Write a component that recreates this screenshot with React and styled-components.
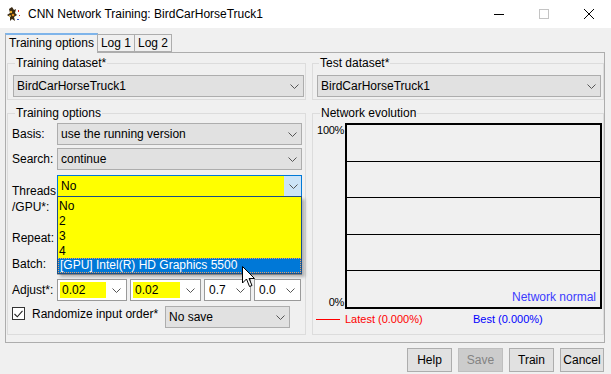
import React from "react";
import styled, { createGlobalStyle } from "styled-components";

const GlobalStyle = createGlobalStyle`
  html, body { margin: 0; padding: 0; background: #f0f0f0; }
  body {
    font-family: "Liberation Sans", Arial, sans-serif;
    font-size: 12px;
    color: #000;
  }
  * { box-sizing: border-box; }
`;

const Window = styled.div`
  position: relative;
  width: 611px;
  height: 374px;
  background: #f0f0f0;
  display: flex;
  flex-direction: column;
  overflow: hidden;
`;

const TitleBar = styled.div`
  height: 28px;
  flex-shrink: 0;
  background: #fff;
  display: flex;
  align-items: center;
`;

const AppIcon = styled.div`
  width: 16px;
  height: 16px;
  margin: 0 6px 0 6px;
  display: flex;
`;

const Title = styled.div`
  flex: 1;
  font-size: 12px;
  line-height: 14px;
`;

const WinButton = styled.div`
  width: 45px;
  height: 28px;
  display: flex;
  align-items: center;
  justify-content: center;
`;

const TabStrip = styled.div`
  display: flex;
  align-items: flex-end;
  height: 19px;
  margin: 5px 0 0 5px;
  position: relative;
  z-index: 1;
`;

const Tab = styled.div`
  height: ${(p) => (p.$active ? "20px" : "18px")};
  margin-bottom: ${(p) => (p.$active ? "-1px" : "0")};
  padding: 0 3px;
  border: 1px solid #adadad;
  border-left: ${(p) => (p.$first ? "1px solid #adadad" : "none")};
  border-top: ${(p) => (p.$active ? "2px solid #7eb4ea" : "1px solid #adadad")};
  border-bottom: ${(p) => (p.$active ? "none" : "1px solid #adadad")};
  background: #f0f0f0;
  line-height: 16px;
  font-size: 12px;
  white-space: nowrap;
`;

const Panel = styled.div`
  margin: 0 6px 0 5px;
  border: 1px solid #adadad;
  padding: 3px 1px 7px 1px;
  display: grid;
  grid-template-columns: 299px 292px;
  grid-template-rows: auto auto;
  column-gap: 6px;
  row-gap: 6px;
`;

const Group = styled.fieldset`
  margin: 0;
  min-width: 0;
  border: 1px solid #dcdcdc;
  padding: ${(p) => p.$pad};
`;

const Legend = styled.legend`
  margin-left: ${(p) => p.$indent || 2}px;
  padding: 0 1px;
  font-size: 12px;
  line-height: 14px;
`;

const ComboBox = styled.div`
  position: relative;
  height: 22px;
  width: ${(p) => (p.$w ? `${p.$w}px` : "100%")};
  flex-shrink: 0;
  border: 1px solid ${(p) => (p.$focus ? "#0078d7" : p.$edit ? "#9a9a9a" : "#adadad")};
  background: ${(p) => p.$bg || "#e1e1e1"};
  display: flex;
  align-items: stretch;
`;

const ComboText = styled.div`
  flex: 1;
  padding-left: ${(p) => p.$pl ?? 3}px;
  line-height: 20px;
  white-space: nowrap;
  overflow: hidden;
`;

const EditField = styled.div`
  flex: 1;
  margin: 2px 0 2px 2px;
  background: ${(p) => p.$bg || "transparent"};
  padding-left: 2px;
  line-height: 16px;
`;

const ArrowZone = styled.div`
  width: ${(p) => p.$w || 17}px;
  display: flex;
  align-items: center;
  justify-content: center;
  background: ${(p) => (p.$active ? "#cce4f7" : "transparent")};
  border-left: ${(p) => (p.$active ? "1px solid #cce4f7" : "none")};
`;

const OptionsBody = styled.div`
  display: flex;
  flex-direction: column;
`;

const FormRow = styled.div`
  display: grid;
  grid-template-columns: 45px 1fr;
  height: ${(p) => p.$h || 22}px;
  margin-top: ${(p) => p.$mt || 0}px;
  align-items: ${(p) => (p.$tall ? "start" : "center")};
`;

const RowLabel = styled.div`
  line-height: 16px;
  white-space: nowrap;
  align-self: center;
`;

const ComboSlot = styled.div`
  position: relative;
`;

const AdjustSet = styled.div`
  display: flex;
  gap: 3px;
`;

const CheckRow = styled.div`
  display: grid;
  grid-template-columns: 153px 125px;
  margin-top: 5px;
  height: 22px;
`;

const CheckLabel = styled.label`
  display: flex;
  align-items: flex-start;
  padding-top: 1px;
  gap: 7px;
  line-height: 14px;
  white-space: nowrap;
`;

const CheckBox = styled.span`
  width: 13px;
  height: 13px;
  border: 1px solid #333;
  background: #fff;
  display: flex;
  align-items: center;
  justify-content: center;
`;

const DropList = styled.div`
  position: absolute;
  top: 21px;
  left: 0;
  right: 0;
  padding-top: 1px;
  background: #ffff00;
  border: 1px solid #1b4f86;
  z-index: 5;
  box-shadow: 3px 3px 3px rgba(0, 0, 0, 0.25);
`;

const DropItem = styled.div`
  height: 15px;
  line-height: ${(p) => (p.$sel ? 13 : 16)}px;
  padding-left: 1px;
  background: ${(p) => (p.$sel ? "#0078d7" : "transparent")};
  color: ${(p) => (p.$sel ? "#fff" : "#000")};
  border: ${(p) => (p.$sel ? "1px dotted #f0a060" : "none")};
`;

const EvolutionBody = styled.div`
  display: grid;
  grid-template-columns: 30px 1fr;
  grid-template-rows: 186px auto;
`;

const Axis = styled.div`
  display: flex;
  flex-direction: column;
  justify-content: space-between;
  align-items: flex-end;
  padding: 1px 1px 0 0;
  font-size: 11px;
  line-height: 13px;
  letter-spacing: -0.3px;
`;

const Chart = styled.div`
  position: relative;
  border: 2px solid #000;
  display: flex;
  flex-direction: column;
`;

const Band = styled.div`
  flex: 1;
  border-top: ${(p) => (p.$first ? "none" : "1px solid #000")};
`;

const ChartNote = styled.div`
  position: absolute;
  right: 4px;
  bottom: 3px;
  color: #3b3bff;
  font-size: 12px;
`;

const ChartLegend = styled.div`
  grid-column: 1 / span 2;
  display: flex;
  align-items: center;
  height: 16px;
  margin-top: 2px;
  padding-left: 1px;
  font-size: 11px;
`;

const LegendLine = styled.span`
  width: 24px;
  height: 1px;
  background: #ff0000;
  margin-right: 5px;
`;

const LegendText = styled.span`
  color: ${(p) => p.$color};
  width: ${(p) => (p.$w ? `${p.$w}px` : "auto")};
`;

const ButtonBar = styled.div`
  display: flex;
  justify-content: flex-end;
  gap: 6px;
  margin: 5px 7px 0 0;
`;

const Button = styled.div`
  width: ${(p) => p.$w || 45}px;
  height: 24px;
  border: 1px solid ${(p) => (p.$disabled ? "#bfbfbf" : "#adadad")};
  background: ${(p) => (p.$disabled ? "#cccccc" : "#e1e1e1")};
  color: ${(p) => (p.$disabled ? "#838383" : "#000")};
  display: flex;
  align-items: center;
  justify-content: center;
`;

const Pointer = styled.svg`
  position: absolute;
  left: 242px;
  top: 266px;
  z-index: 10;
`;

const Chevron = () => (
  <svg width="9" height="5" viewBox="0 0 9 5">
    <polyline points="0.5,0.5 4.5,4.5 8.5,0.5" fill="none" stroke="#555" strokeWidth="1" />
  </svg>
);

const Combo = ({ text, w, bg, focus, active }) => (
  <ComboBox $w={w} $bg={bg} $focus={focus}>
    <ComboText>{text}</ComboText>
    <ArrowZone $active={active}>
      <Chevron />
    </ArrowZone>
  </ComboBox>
);

const EditCombo = ({ text, w, fieldBg }) => (
  <ComboBox $w={w} $bg="#fff" $edit>
    <EditField $bg={fieldBg}>{text}</EditField>
    <ArrowZone $w={20}>
      <Chevron />
    </ArrowZone>
  </ComboBox>
);

const BugIcon = () => (
  <svg width="16" height="16" viewBox="0 0 16 16">
    <path d="M3 3 L6 1 L8 4 L10 3 L9 7 L11 9 L8 11 L9 15 L6 13 L4 15 L4 11 L1 9 L4 7 Z" fill="#3a2a14" />
    <circle cx="5" cy="6" r="1.2" fill="#f0b030" />
    <circle cx="7" cy="9" r="1.3" fill="#e08a20" />
    <circle cx="4" cy="10" r="0.9" fill="#f4d060" />
    <rect x="12" y="4" width="1" height="2" fill="#e03030" />
    <rect x="13" y="9" width="1" height="1" fill="#e03030" />
    <rect x="11" y="13" width="2" height="1" fill="#3050d0" />
  </svg>
);

export default function App() {
  return (
    <>
      <GlobalStyle />
      <Window>
        <TitleBar>
          <AppIcon>
            <BugIcon />
          </AppIcon>
          <Title>CNN Network Training: BirdCarHorseTruck1</Title>
          <WinButton>
            <svg width="10" height="10" viewBox="0 0 10 10">
              <line x1="0" y1="5.5" x2="10" y2="5.5" stroke="#000" strokeWidth="1" />
            </svg>
          </WinButton>
          <WinButton>
            <svg width="10" height="10" viewBox="0 0 10 10">
              <rect x="0.5" y="0.5" width="9" height="9" fill="none" stroke="#c4c4c4" strokeWidth="1" />
            </svg>
          </WinButton>
          <WinButton>
            <svg width="10" height="10" viewBox="0 0 10 10">
              <path d="M0 0 L10 10 M10 0 L0 10" stroke="#000" strokeWidth="1" />
            </svg>
          </WinButton>
        </TitleBar>

        <TabStrip>
          <Tab $active $first>Training options</Tab>
          <Tab>Log 1</Tab>
          <Tab>Log 2</Tab>
        </TabStrip>

        <Panel>
          <Group $pad="5px 1px 2px 5px">
            <Legend $indent={2}>Training dataset*</Legend>
            <Combo text="BirdCarHorseTruck1" />
          </Group>

          <Group $pad="5px 2px 2px 4px">
            <Legend $indent={2}>Test dataset*</Legend>
            <Combo text="BirdCarHorseTruck1" />
          </Group>

          <Group $pad="3px 3px 6px 4px">
            <Legend $indent={3}>Training options</Legend>
            <OptionsBody>
              <FormRow>
                <RowLabel>Basis:</RowLabel>
                <Combo text="use the running version" />
              </FormRow>
              <FormRow $mt={3}>
                <RowLabel>Search:</RowLabel>
                <Combo text="continue" />
              </FormRow>
              <FormRow $mt={5} $h={48} $tall>
                <RowLabel>
                  Threads
                  <br />
                  /GPU*:
                </RowLabel>
                <ComboSlot>
                  <Combo text="No" bg="#ffff00" focus active />
                  <DropList>
                    <DropItem>No</DropItem>
                    <DropItem>2</DropItem>
                    <DropItem>3</DropItem>
                    <DropItem>4</DropItem>
                    <DropItem $sel>[GPU] Intel(R) HD Graphics 5500</DropItem>
                  </DropList>
                </ComboSlot>
              </FormRow>
              <FormRow $mt={4}>
                <RowLabel>Repeat:</RowLabel>
                <Combo text="" />
              </FormRow>
              <FormRow $mt={4}>
                <RowLabel>Batch:</RowLabel>
                <Combo text="" />
              </FormRow>
              <FormRow $mt={4}>
                <RowLabel>Adjust*:</RowLabel>
                <AdjustSet>
                  <EditCombo text="0.02" w={70} fieldBg="#ffff00" />
                  <EditCombo text="0.02" w={71} fieldBg="#ffff00" />
                  <EditCombo text="0.7" w={47} />
                  <EditCombo text="0.0" w={47} />
                </AdjustSet>
              </FormRow>
              <CheckRow>
                <CheckLabel>
                  <CheckBox>
                    <svg width="9" height="8" viewBox="0 0 9 8">
                      <polyline points="0.5,4 3.3,6.8 8.5,0.8" fill="none" stroke="#222" strokeWidth="1.1" />
                    </svg>
                  </CheckBox>
                  Randomize input order*
                </CheckLabel>
                <Combo text="No save" />
              </CheckRow>
            </OptionsBody>
          </Group>

          <Group $pad="3px 1px 6px 2px">
            <Legend $indent={5}>Network evolution</Legend>
            <EvolutionBody>
              <Axis>
                <span>100%</span>
                <span>0%</span>
              </Axis>
              <Chart>
                <Band $first />
                <Band />
                <Band />
                <Band />
                <Band />
                <ChartNote>Network normal</ChartNote>
              </Chart>
              <ChartLegend>
                <LegendLine />
                <LegendText $color="#ff0000" $w={128}>Latest (0.000%)</LegendText>
                <LegendText $color="#0000ff">Best (0.000%)</LegendText>
              </ChartLegend>
            </EvolutionBody>
          </Group>
        </Panel>

        <ButtonBar>
          <Button>Help</Button>
          <Button $disabled>Save</Button>
          <Button>Train</Button>
          <Button $w={44}>Cancel</Button>
        </ButtonBar>

        <Pointer width="13" height="22" viewBox="0 0 13 22">
          <path
            d="M0.5 0.5 L0.5 17 L4.5 13 L7.5 20.5 L10 19.5 L7 12.5 L12.5 12.5 Z"
            fill="#fff"
            stroke="#000"
            strokeWidth="1"
            strokeLinejoin="round"
          />
        </Pointer>
      </Window>
    </>
  );
}
